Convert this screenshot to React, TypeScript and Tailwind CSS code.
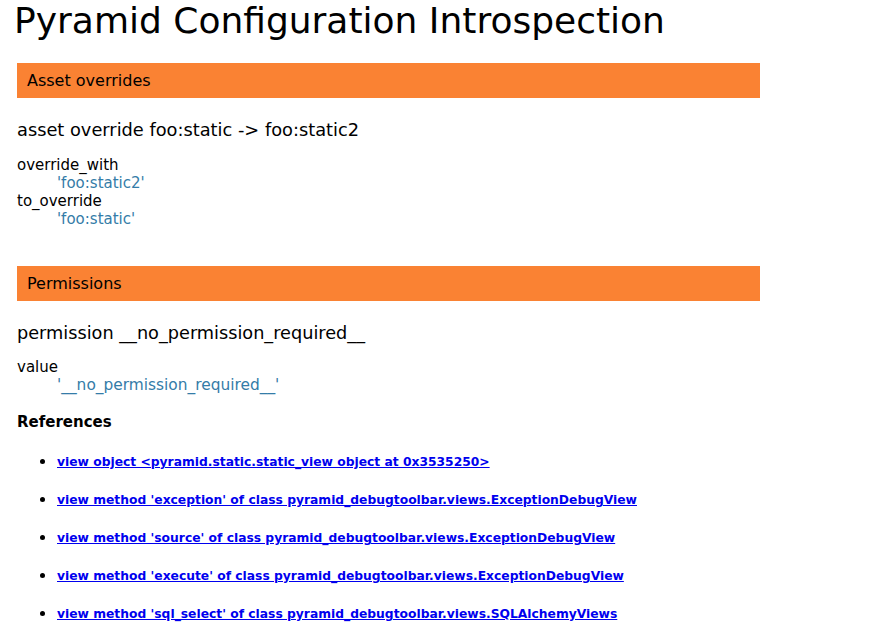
import React from "react";

const refs = [
  "view object <pyramid.static.static_view object at 0x3535250>",
  "view method 'exception' of class pyramid_debugtoolbar.views.ExceptionDebugView",
  "view method 'source' of class pyramid_debugtoolbar.views.ExceptionDebugView",
  "view method 'execute' of class pyramid_debugtoolbar.views.ExceptionDebugView",
  "view method 'sql_select' of class pyramid_debugtoolbar.views.SQLAlchemyViews",
];

function Bar({ children }: { children: React.ReactNode }) {
  return (
    <div className="w-[743px] h-[35px] bg-[#fa8233] pl-[10px] text-[16px] leading-[35px] text-black">
      {children}
    </div>
  );
}

export default function App() {
  return (
    <div className="min-h-[626px] bg-white text-black pl-[17px] pt-0 font-['DejaVu_Sans',sans-serif]">
      <h1 className="-ml-[3px] text-[36px] leading-[40px] pt-[1px] mb-[22px]">
        Pyramid Configuration Introspection
      </h1>
      <Bar>Asset overrides</Bar>
      <div className="mt-[20px] text-[17.8px] leading-[24px]">asset override foo:static -&gt; foo:static2</div>
      <dl className="mt-[14px] text-[15px] leading-[18px]">
        <dt>override_with</dt>
        <dd className="pl-[40px] text-[#347ca8]">'foo:static2'</dd>
        <dt>to_override</dt>
        <dd className="pl-[40px] text-[#347ca8]">'foo:static'</dd>
      </dl>
      <div className="mt-[38px]">
        <Bar>Permissions</Bar>
      </div>
      <div className="mt-[20px] text-[17.7px] leading-[24px]">permission __no_permission_required__</div>
      <dl className="mt-[13px] text-[15px] leading-[18px]">
        <dt>value</dt>
        <dd className="pl-[40px] text-[#347ca8] text-[15.4px]">'__no_permission_required__'</dd>
      </dl>
      <div className="mt-[19px] text-[15px] leading-[18px] font-bold">References</div>
      <ul className="mt-[21px] pl-[40px] list-disc text-[17px] leading-[16px] font-bold">
        {refs.map((r) => (
          <li key={r} className="h-[16px] mb-[22px]">
            <a href="#" className="text-[#0000ee] underline text-[12.3px] leading-[16px]">{r}</a>
          </li>
        ))}
      </ul>
    </div>
  );
}
